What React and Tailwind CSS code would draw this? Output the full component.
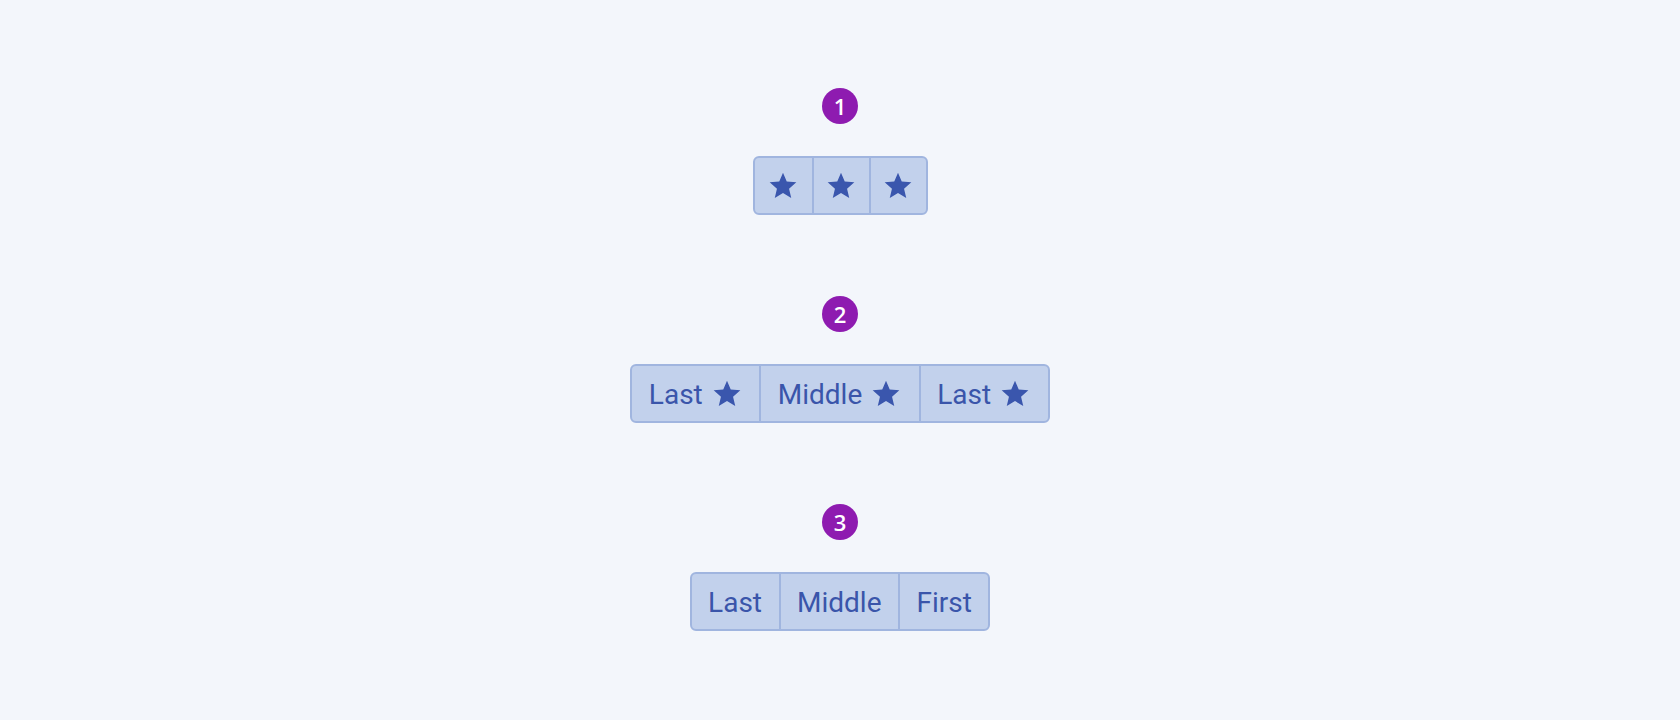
import React from "react";

const Star = () => (
  <svg viewBox="0 0 24 24" className="w-8 h-8 fill-[#3a56ad] shrink-0">
    <path d="M12 17.27L18.18 21l-1.64-7.03L22 9.24l-7.19-.61L12 2 9.19 8.63 2 9.24l5.46 4.73L5.82 21z" />
  </svg>
);

const Badge = ({ n }) => (
  <div className="w-9 h-9 rounded-full bg-[#8e1bb0] flex items-center justify-center text-white text-[22px] font-semibold leading-none [font-family:'Open_Sans',sans-serif]">
    {n}
  </div>
);

const Group = ({ children }) => (
  <div className="flex rounded-md border-2 border-[#a0b5df] bg-[#c2d1ec] overflow-hidden">
    {children}
  </div>
);

const Seg = ({ first, children, className = "" }) => (
  <div
    className={
      "flex items-center h-[55px] text-[28px] leading-8 text-[#3a55aa] " +
      (first ? "" : "border-l-2 border-[#a0b5df] ") +
      className
    }
  >
    {children}
  </div>
);

const Label = ({ children }) => <span className="pt-0.5">{children}</span>;

export default function App() {
  return (
    <div className="min-h-[720px] bg-[#f3f6fb] flex flex-col items-center pt-[88px] gap-[81px] [font-family:Roboto,sans-serif]">
      <div className="flex flex-col items-center gap-8">
        <Badge n="1" />
        <Group>
          <Seg first className="w-[57px] justify-center">
            <Star />
          </Seg>
          <Seg className="w-[57px] justify-center">
            <Star />
          </Seg>
          <Seg className="w-[57px] justify-center">
            <Star />
          </Seg>
        </Group>
      </div>

      <div className="flex flex-col items-center gap-8">
        <Badge n="2" />
        <Group>
          <Seg first className="px-[16.5px] gap-2">
            <Label>Last</Label>
            <Star />
          </Seg>
          <Seg className="px-[16.5px] gap-2">
            <Label>Middle</Label>
            <Star />
          </Seg>
          <Seg className="px-[16.5px] gap-2">
            <Label>Last</Label>
            <Star />
          </Seg>
        </Group>
      </div>

      <div className="flex flex-col items-center gap-8">
        <Badge n="3" />
        <Group>
          <Seg first className="px-[16.5px]">
            <Label>Last</Label>
          </Seg>
          <Seg className="px-[16.5px]">
            <Label>Middle</Label>
          </Seg>
          <Seg className="px-[16.5px]">
            <Label>First</Label>
          </Seg>
        </Group>
      </div>
    </div>
  );
}
